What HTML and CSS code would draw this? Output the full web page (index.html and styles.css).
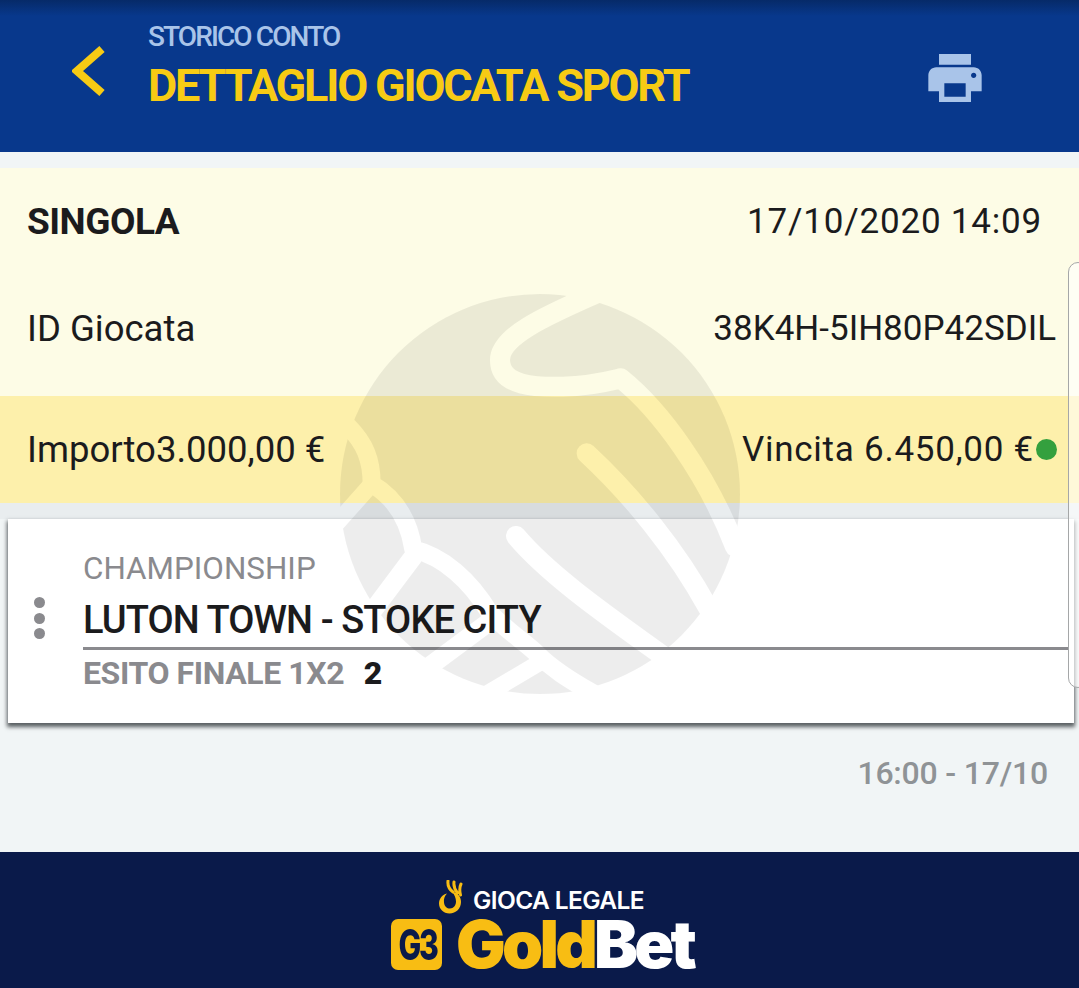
FILE: index.html
```html
<!DOCTYPE html>
<html lang="it">
<head>
<meta charset="UTF-8" />
<title>Dettaglio giocata sport</title>
<link rel="stylesheet" href="styles.css">
</head>
<body>

<header class="top-bar">
  <svg class="back-icon" viewBox="0 0 33 50" width="33" height="50" aria-hidden="true">
    <polyline points="30,3 5,25 30,47" />
  </svg>
  <div class="top-titles">
    <div class="top-sub">STORICO CONTO</div>
    <h1 class="top-title">DETTAGLIO GIOCATA SPORT</h1>
  </div>
  <svg class="print-icon" viewBox="2 3 20 18" width="54" height="48" aria-hidden="true">
    <path d="M19 8H5c-1.660 0-3 1.340-3 3v6h4v4h12v-4h4v-6c0-1.660-1.340-3-3-3zm-3 11H8v-5h8v5zm3-7c-.55 0-1-.45-1-1s.45-1 1-1 1 .45 1 1-.45 1-1 1zm-1-9H6v4h12V3z" />
  </svg>
</header>

<main class="content">
  <section class="info">
    <div class="info-row first">
      <span class="bet-type">SINGOLA</span>
      <span class="bet-date">17/10/2020 14:09</span>
    </div>
    <div class="info-row second">
      <span class="label">ID Giocata</span>
      <span class="bet-id">38K4H-5IH80P42SDIL</span>
    </div>
  </section>

  <section class="amounts">
    <span class="label">Importo3.000,00 €</span>
    <span class="win">Vincita 6.450,00 €<i class="dot"></i></span>
  </section>

  <div class="card-gap">
    <section class="event-card">
      <div class="dots"><i></i><i></i><i></i></div>
      <div class="event-body">
        <div class="league">CHAMPIONSHIP</div>
        <div class="match">LUTON TOWN - STOKE CITY</div>
        <div class="market">ESITO FINALE 1X2 <b>2</b></div>
      </div>
    </section>
  </div>

  <div class="event-time">16:00 - 17/10</div>
</main>

<footer class="bottom-bar">
  <div class="legal">
    <svg class="ok-hand" viewBox="0 0 26 34" width="26" height="34" aria-hidden="true">
      <path class="ring" fill-rule="evenodd" d="M14 12C20 12.500 23 17 23 22C23 28.500 18 33.500 11.500 33.500C5.500 33.500 1 29 1 23.500C1 18.500 4.500 14.500 9 13.500C6.500 16 5.500 19 6 22.500C6.500 26.500 9 28.500 12 28.500C15.500 28.500 18 25.500 18 21.500C18 18 16.500 14.500 14 12Z" />
      <path class="fingers" d="M10 1C9.500 5 11 9 15 12M16 2C15.500 6 17 10 19.500 13M23 4C21.500 7 21.500 11 22.500 15" />
    </svg>
    <span>GIOCA LEGALE</span>
  </div>
  <div class="brand">
    <span class="badge"><span class="badge-text">G3</span></span>
    <span class="gold">Gold</span><span class="bet">Bet</span>
  </div>
</footer>

<svg class="watermark" viewBox="0 0 1260 1260" width="420" height="420" aria-hidden="true">
  <mask id="ballCuts" maskUnits="userSpaceOnUse" x="0" y="0" width="1260" height="1260">
    <circle cx="630" cy="642" r="600" fill="#fff" />
    <g fill="none" stroke="#000" stroke-width="60" stroke-linecap="round" stroke-linejoin="round">
      <path d="M800 40C640 110 510 170 510 240C510 320 620 322 700 320C780 318 830 305 872 295C990 390 1130 580 1215 800" />
      <path d="M770 520C900 640 1040 810 1135 985" />
      <path d="M558 768C660 890 850 1020 1030 1150" />
      <path stroke-width="54" d="M55 440C105 490 125 540 125 612C190 650 235 710 250 808C340 830 420 900 480 1000C540 1060 590 1090 625 1125C665 1165 710 1195 790 1240" />
      <path stroke-width="50" d="M125 612L20 730" />
      <path stroke-width="56" d="M250 830L130 990" />
      <path stroke-width="56" d="M472 1030L230 1210" />
      <path stroke-width="50" d="M625 1150L440 1260" />
    </g>
  </mask>
  <rect class="watermark-fill" width="1260" height="1260" mask="url(#ballCuts)" />
</svg>

<div class="side-tab"></div>

</body>
</html>
```

FILE: styles.css
```css
* {
  box-sizing: border-box;
}
body {
  margin: 0;
  height: 988px;
  overflow: hidden;
  position: relative;
  background-color: #f1f5f6;
  font-family: Roboto, "Liberation Sans", sans-serif;
  color: #1b1b1d;
}

.top-bar {
  height: 152px;
  display: flex;
  align-items: flex-start;
  padding-left: 72px;
  background: linear-gradient(#062a68, #08388c 16px);
}
.back-icon {
  margin-top: 46px;
  fill: none;
  stroke: #f7cb14;
  stroke-width: 8;
}
.top-titles {
  margin-left: 43px;
  width: 780px;
  padding-top: 20px;
}
.top-sub {
  font-size: 28px;
  line-height: 33px;
  font-weight: 500;
  letter-spacing: -1.9px;
  color: #a9c4e9;
}
.top-title {
  margin: 8px 0 0 0;
  font-size: 45px;
  line-height: 50px;
  font-weight: 700;
  letter-spacing: -2.2px;
  color: #f7cb14;
}
.print-icon {
  margin-top: 54px;
  fill: #a9c4e9;
}

.content {
  height: 700px;
  padding-top: 16px;
}
.info {
  height: 228px;
  padding: 0 23px 0 27px;
  background-color: #fdfce6;
  font-size: 35px;
}
.info-row {
  display: flex;
  justify-content: space-between;
  align-items: center;
}
.info-row.first {
  height: 106px;
}
.info-row.second {
  height: 108px;
}
.label {
  font-size: 36.500px;
}
.bet-type {
  font-size: 37px;
  font-weight: 700;
  letter-spacing: -0.5px;
}
.bet-date {
  margin-right: 14px;
  letter-spacing: 0.8px;
}
.amounts {
  height: 107px;
  padding: 0 22px 0 27px;
  display: flex;
  justify-content: space-between;
  align-items: center;
  background-color: #fdf0ab;
  font-size: 35px;
}
.win {
  display: flex;
  align-items: center;
  letter-spacing: 0.75px;
}
.dot {
  width: 21px;
  height: 21px;
  margin-left: 2px;
  border-radius: 50%;
  background-color: #34a03e;
}

.card-gap {
  height: 220px;
  padding: 16px 5px 0 8px;
  background: linear-gradient(#e9edef 16px, transparent 16px);
}
.event-card {
  height: 204px;
  display: flex;
  background-color: #fff;
  box-shadow: 0 3px 4px 1px rgba(40, 45, 50, 0.75);
}
.dots {
  width: 75px;
  padding: 78px 0 0 26px;
}
.dots i {
  display: block;
  width: 11px;
  height: 11px;
  margin-bottom: 4.500px;
  border-radius: 50%;
  background-color: #8a8a8e;
}
.event-body {
  flex: 1;
  padding-top: 32px;
  margin-right: 5px;
}
.league {
  font-size: 31.400px;
  line-height: 36px;
  color: #8a8a8e;
}
.match {
  margin-top: 8px;
  height: 55px;
  padding-top: 3px;
  border-bottom: 3px solid #8a8a8e;
  font-size: 38px;
  line-height: 44px;
  font-weight: 500;
  letter-spacing: -0.9px;
}
.market {
  margin-top: 2px;
  font-size: 32px;
  line-height: 42px;
  font-weight: 700;
  letter-spacing: -0.4px;
  color: #8a8a8e;
}
.market b {
  margin-left: 12px;
  color: #1b1b1d;
}
.event-time {
  margin-top: 30px;
  padding-right: 31px;
  text-align: right;
  font-size: 32px;
  line-height: 40px;
  font-weight: 500;
  letter-spacing: -0.2px;
  color: #8f9396;
}

.bottom-bar {
  height: 136px;
  background-color: #0a1a4a;
  display: flex;
  flex-direction: column;
  align-items: center;
  padding-top: 26px;
  color: #fff;
}
.legal {
  display: flex;
  align-items: flex-end;
  height: 36px;
  margin-left: 3px;
  font-family: Inter, "Noto Sans", sans-serif;
  font-size: 24.500px;
  font-weight: 600;
  letter-spacing: -0.6px;
  line-height: 28px;
}
.ok-hand {
  margin-right: 9px;
  fill: none;
}
.ring {
  fill: #f8bd13;
}
.fingers {
  stroke: #f8bd13;
  stroke-linecap: round;
  stroke-width: 3;
}
.brand {
  display: flex;
  align-items: center;
  height: 54px;
  margin-top: 3px;
  margin-left: 5px;
  font-family: Inter, "Noto Sans", sans-serif;
  font-size: 66px;
  line-height: 50px;
  font-weight: 900;
  letter-spacing: -3.800px;
}
.badge {
  width: 51px;
  height: 51px;
  margin-right: 14px;
  border-radius: 7px;
  background-color: #f8bd13;
  color: #0a1a4a;
  font-size: 42px;
  font-weight: 800;
  line-height: 51px;
  letter-spacing: -3px;
  text-align: center;
  overflow: hidden;
}
.badge-text {
  display: inline-block;
  transform: scaleX(0.72);
}
.gold {
  color: #f8bd13;
}

.watermark {
  position: absolute;
  left: 330px;
  top: 280px;
  pointer-events: none;
}
.watermark-fill {
  fill: #000;
  opacity: 0.065;
}
.side-tab {
  position: absolute;
  left: 1068px;
  top: 262px;
  width: 20px;
  height: 426px;
  border: 1px solid #a5a7a8;
  border-radius: 10px;
  background-color: rgba(255, 255, 255, 0.55);
}
```
